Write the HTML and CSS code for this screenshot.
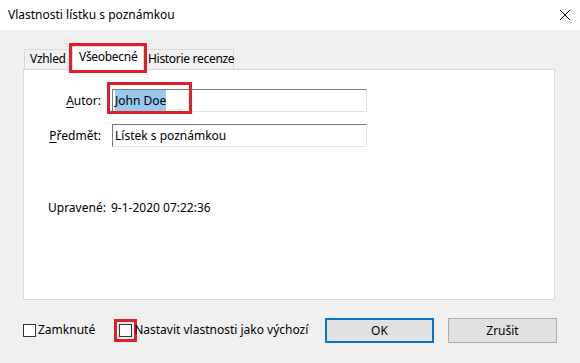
FILE: index.html
```html
<!DOCTYPE html>
<html lang="cs">
<head>
<meta charset="utf-8">
<title>Vlastnosti lístku s poznámkou</title>
<link rel="stylesheet" href="styles.css">
</head>
<body>
<div class="window">
  <div class="titlebar">
    <span class="title">Vlastnosti lístku s poznámkou</span>
    <svg class="close" width="12" height="12" viewBox="0 0 12 12"><path d="M1 1 L11 11 M11 1 L1 11" stroke="#000" stroke-width="1"/></svg>
  </div>
  <div class="content">
    <div class="tabs">
      <div class="tab first">Vzhled</div>
      <div class="tab selected">Všeobecné</div>
      <div class="tab last">Historie recenze</div>
    </div>
    <div class="panel">
      <div class="form">
        <label class="label"><u>A</u>utor:</label>
        <div class="input author"><span class="sel">John Doe</span><span class="mark"></span></div>
        <label class="label"><u>P</u>ředmět:</label>
        <div class="input">Lístek s poznámkou</div>
      </div>
      <div class="modified">
        <span class="mlabel">Upravené:</span>
        <span class="mvalue">9-1-2020 07:22:36</span>
      </div>
    </div>
    <div class="footer">
      <label class="check"><span class="box"></span>Zamknuté</label>
      <label class="check second"><span class="box marked"></span>Nastavit vlastnosti jako výchozí</label>
      <div class="buttons">
        <button class="btn primary">OK</button>
        <button class="btn">Zrušit</button>
      </div>
    </div>
  </div>
</div>
</body>
</html>
```
FILE: styles.css
```css
* { box-sizing: border-box; }
html, body { margin: 0; padding: 0; }
body {
  width: 580px;
  height: 363px;
  overflow: hidden;
  background: #f0f0f0;
  font-family: "Noto Sans", "Open Sans", "Liberation Sans", sans-serif;
  font-size: 12px;
  color: #000;
}
.window { width: 580px; height: 363px; display: flex; flex-direction: column; }
.titlebar {
  height: 30px;
  background: #fff;
  display: flex;
  align-items: center;
  justify-content: space-between;
  padding: 0 9px 0 8px;
}
.title { font-size: 12px; line-height: 16px; }
.close { display: block; margin-top: -1px; }
.content { padding: 16px 25px 0 23px; flex: 1; display: flex; flex-direction: column; }
.tabs { display: flex; align-items: flex-end; height: 23px; padding-left: 1px; position: relative; z-index: 1; letter-spacing: -0.3px; }
.tab {
  height: 20px;
  line-height: 18px;
  border: 1px solid #d9d9d9;
  border-bottom: none;
  background: #f0f0f0;
}
.tab.first { width: 46px; padding-left: 5px; border-right: none; }
.tab.last { width: 87px; padding-left: 1px; border-left: none; white-space: nowrap; }
.tab.selected {
  width: 72px;
  height: 24px;
  background: #fff;
  padding-left: 6px;
  line-height: 19px;
  margin: 0 3px -1px 2px;
  border: 1px solid #d9d9d9;
  border-bottom: none;
  outline: 3px solid #e11f2a;
  outline-offset: 0;
  position: relative;
}
.panel {
  background: #fff;
  border: 1px solid #d9d9d9;
  height: 231px;
  width: 532px;
  padding-top: 19px;
}
.form {
  display: grid;
  grid-template-columns: 77px 255px;
  column-gap: 11px;
  row-gap: 12px;
  align-items: center;
}
.label { text-align: right; line-height: 16px; }
.label u { text-decoration: underline; text-underline-offset: 2px; }
.input {
  height: 23px;
  border: 1px solid #e3e3e3;
  border-top-color: #7a7a7a;
  border-left-color: #7a7a7a;
  padding: 0 2px;
  line-height: 21px;
  position: relative;
}
.sel { background: #99c9ef; padding: 2px 0 2px 0; }
.mark {
  position: absolute;
  left: -6px;
  top: -8px;
  width: 85px;
  height: 32px;
  border: 3px solid #e11f2a;
}
.modified { display: flex; margin-top: 53px; padding-left: 24px; line-height: 16px; }
.mlabel { width: 63px; }
.footer { display: flex; align-items: center; margin-top: 16px; height: 28px; }
.check { display: flex; align-items: center; line-height: 16px; }
.box {
  width: 13px;
  height: 13px;
  border: 1px solid #333;
  background: #fff;
  margin-right: 2px;
}
.second { margin-left: 24px; }
.box.marked { outline: 3px solid #e11f2a; outline-offset: 2px; }
.buttons { margin-left: auto; display: flex; gap: 14px; margin-right: -2px; }
.btn {
  width: 109px;
  height: 25px;
  font: inherit;
  background: #e1e1e1;
  border: 1px solid #adadad;
  padding: 0;
  color: #000;
}
.btn.primary { border: 2px solid #0078d7; }
```
